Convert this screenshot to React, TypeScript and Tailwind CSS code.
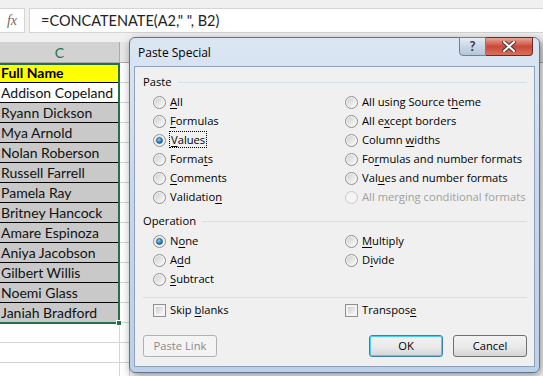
import React from 'react';

const names = [
  'Addison Copeland',
  'Ryann Dickson',
  'Mya Arnold',
  'Nolan Roberson',
  'Russell Farrell',
  'Pamela Ray',
  'Britney Hancock',
  'Amare Espinoza',
  'Aniya Jacobson',
  'Gilbert Willis',
  'Noemi Glass',
  'Janiah Bradford',
];

function Radio({ checked = false, disabled = false }: { checked?: boolean; disabled?: boolean }) {
  return (
    <svg width="13" height="13" viewBox="0 0 13 13" className="shrink-0">
      <defs>
        <linearGradient id="rfill" x1="0" y1="0" x2="1" y2="1">
          <stop offset="0" stopColor="#cfd0d1" />
          <stop offset="1" stopColor="#fbfbfb" />
        </linearGradient>
        <radialGradient id="rdot" cx="0.4" cy="0.35" r="0.7">
          <stop offset="0" stopColor="#8fd0f6" />
          <stop offset="0.6" stopColor="#2f86c6" />
          <stop offset="1" stopColor="#1c4d7a" />
        </radialGradient>
      </defs>
      <circle cx="6.5" cy="6.5" r="6" fill="#f4f4f4" stroke={disabled ? '#c8c8c8' : '#8e8f8f'} />
      {!disabled && <circle cx="6.5" cy="6.5" r="4.5" fill="url(#rfill)" />}
      {checked && <circle cx="6.5" cy="6.5" r="3" fill="url(#rdot)" stroke="#1a4a78" strokeWidth="0.6" />}
    </svg>
  );
}

function Check() {
  return (
    <span className="w-[13px] h-[13px] shrink-0 border border-[#8e8f8f] bg-[#f4f4f4] p-[2px] flex">
      <span className="flex-1 bg-gradient-to-br from-[#cbcfd4] to-[#f7f7f7]" />
    </span>
  );
}

function Opt({ children, checked, disabled }: { children: React.ReactNode; checked?: boolean; disabled?: boolean }) {
  return (
    <div className="h-[19px] flex items-center gap-[4px]">
      <Radio checked={checked} disabled={disabled} />
      <span className={disabled ? 'text-[#a0a0a0]' : 'text-black'}>{children}</span>
    </div>
  );
}

function Section({ title }: { title: string }) {
  return (
    <div className="h-[16px] flex items-center pl-[8px] pr-[7px]">
      <span>{title}</span>
      <span className="h-px flex-1 bg-[#d5dfe5] ml-[6px]" />
    </div>
  );
}

function U({ children }: { children: React.ReactNode }) {
  return <span className="underline underline-offset-2 decoration-1">{children}</span>;
}

export default function App() {
  return (
    <div className="relative w-[543px] h-[376px] overflow-hidden bg-white" style={{ fontFamily: 'Lato, sans-serif' }}>
      {/* formula bar */}
      <div className="h-[42px] bg-[#f0f0f0] pt-[8px]">
        <div className="h-[25px] flex gap-[4px]">
          <div className="w-[25px] bg-white border border-l-0 border-[#d4d4d4] flex items-center justify-center">
            <span className="italic text-[#6b6b6b] text-[14px]" style={{ fontFamily: '"Liberation Serif", serif' }}>fx</span>
          </div>
          <div className="flex-1 bg-white border border-r-0 border-[#d4d4d4] flex items-center pl-[11px] text-[14.5px] text-[#222]">
            =CONCATENATE(A2," ", B2)
          </div>
        </div>
      </div>

      {/* column header */}
      <div className="h-[21px] flex bg-[#e6e6e6] border-b border-[#ababab]">
        <div className="w-[120px] bg-[#d2d2d2] border-r border-[#ababab] flex items-center justify-center text-[#217346] text-[14px]">
          C
        </div>
        <div className="w-[10px] border-r border-[#ababab]" />
      </div>

      {/* cells */}
      <div className="flex">
        <div className="w-[120px] relative">
          <div className="h-[20px] bg-[#ffff00] border-b border-black font-bold text-[14px] leading-[19px] pl-[1px] text-black">Full Name</div>
          {names.map((n, i) => (
            <div
              key={n}
              className={`h-[20px] border-b border-black text-[14px] leading-[19px] pl-[1px] text-[#111] ${i === 0 ? 'bg-white' : 'bg-[#c9c9c9]'}`}
            >
              {n}
            </div>
          ))}
          <div className="absolute left-0 top-0 w-[120px] h-[261px] border-2 border-l-0 border-[#217346] pointer-events-none" />
          <div className="absolute left-[116px] top-[257px] w-[6px] h-[6px] bg-[#217346] border border-white" />
          <div className="h-[20px] border-b border-r border-[#d4d4d4]" />
          <div className="h-[20px] border-b border-r border-[#d4d4d4]" />
          <div className="h-[20px] border-r border-[#d4d4d4]" />
        </div>
        <div className="w-[10px] border-r border-[#d4d4d4]">
          {Array.from({ length: 16 }).map((_, i) => (
            <div key={i} className="h-[20px] border-b border-[#d4d4d4]" />
          ))}
        </div>
      </div>

      {/* Paste Special dialog */}
      <div
        className="absolute left-[129px] top-[37px] w-[411px] h-[336px] rounded-[6px] border border-[#5d7590] bg-gradient-to-b from-[#dbe6f3] via-[#c6d7ec] to-[#bcd0e8] shadow-[2px_3px_10px_rgba(0,0,0,0.45)] flex flex-col px-[4px] pb-[5px]"
        style={{ fontFamily: '"Open Sans", sans-serif' }}
      >
        <div className="h-[28px] flex items-start">
          <span className="pl-[4px] pt-[6px] text-[12px] text-black">Paste Special</span>
          <div className="ml-auto flex h-[19px] -mt-px mr-[2px]">
            <div className="w-[27px] rounded-bl-[4px] border border-[#6f819a] bg-gradient-to-b from-[#e5edf6] via-[#c9d6e5] to-[#b6c6da] flex items-center justify-center text-[#3a3a3a] text-[13px] font-bold" style={{ fontFamily: 'Lato, sans-serif' }}>
              ?
            </div>
            <div className="w-[47px] rounded-br-[4px] border border-l-0 border-[#6b2b22] bg-gradient-to-b from-[#e8a497] via-[#c9483a] to-[#d8705f] flex items-center justify-center">
              <svg width="14" height="11" viewBox="0 0 14 11">
                <path d="M2 1 L12 10 M12 1 L2 10" stroke="#3c3c3c" strokeWidth="4" strokeLinecap="square" />
                <path d="M2 1 L12 10 M12 1 L2 10" stroke="#fff" strokeWidth="2" strokeLinecap="square" />
              </svg>
            </div>
          </div>
        </div>

        <div className="flex-1 bg-[#f0f0f0] border border-[#8ea2ba] text-[11.2px] text-black flex flex-col">
          <div className="mt-[7px]">
            <Section title="Paste" />
          </div>
          <div className="mt-[3px] grid grid-cols-[192px_1fr] pl-[18px]">
            <Opt><U>A</U>ll</Opt>
            <Opt>All using Source t<U>h</U>eme</Opt>
            <Opt><U>F</U>ormulas</Opt>
            <Opt>All e<U>x</U>cept borders</Opt>
            <Opt checked>
              <span className="outline outline-1 outline-dotted outline-black px-[1px]"><U>V</U>alues</span>
            </Opt>
            <Opt>Column <U>w</U>idths</Opt>
            <Opt>Forma<U>t</U>s</Opt>
            <Opt>Fo<U>r</U>mulas and number formats</Opt>
            <Opt><U>C</U>omments</Opt>
            <Opt>Val<U>u</U>es and number formats</Opt>
            <Opt>Validatio<U>n</U></Opt>
            <Opt disabled>All mer<U>g</U>ing conditional formats</Opt>
          </div>
          <div className="mt-[6px]">
            <Section title="Operation" />
          </div>
          <div className="mt-[3px] grid grid-cols-[192px_1fr] pl-[18px]">
            <Opt checked>N<U>o</U>ne</Opt>
            <Opt><U>M</U>ultiply</Opt>
            <Opt>A<U>d</U>d</Opt>
            <Opt>D<U>i</U>vide</Opt>
            <Opt><U>S</U>ubtract</Opt>
            <div />
          </div>
          <div className="mt-[8px] ml-[8px] mr-[7px] h-px bg-[#d5dfe5]" />
          <div className="mt-[3px] grid grid-cols-[192px_1fr] pl-[18px]">
            <div className="h-[19px] flex items-center gap-[4px]">
              <Check />
              <span>Skip <U>b</U>lanks</span>
            </div>
            <div className="h-[19px] flex items-center gap-[4px]">
              <Check />
              <span>Transpos<U>e</U></span>
            </div>
          </div>
          <div className="mt-[15px] flex pl-[8px] pr-[7px]">
            <div className="w-[74px] h-[22px] rounded-[3px] border border-[#adb2b5] bg-[#f4f4f4] text-[#8a8a8a] flex items-center justify-center">
              Paste Link
            </div>
            <div className="ml-auto w-[74px] h-[22px] rounded-[3px] border border-[#3c7fb1] shadow-[inset_0_0_0_1px_#48d1f8] bg-gradient-to-b from-[#f2f2f2] via-[#ebebeb] to-[#d5d5d5] flex items-center justify-center">
              OK
            </div>
            <div className="ml-[10px] w-[74px] h-[22px] rounded-[3px] border border-[#707070] bg-gradient-to-b from-[#f2f2f2] via-[#ebebeb] to-[#d5d5d5] flex items-center justify-center">
              Cancel
            </div>
          </div>
        </div>
      </div>
    </div>
  );
}
